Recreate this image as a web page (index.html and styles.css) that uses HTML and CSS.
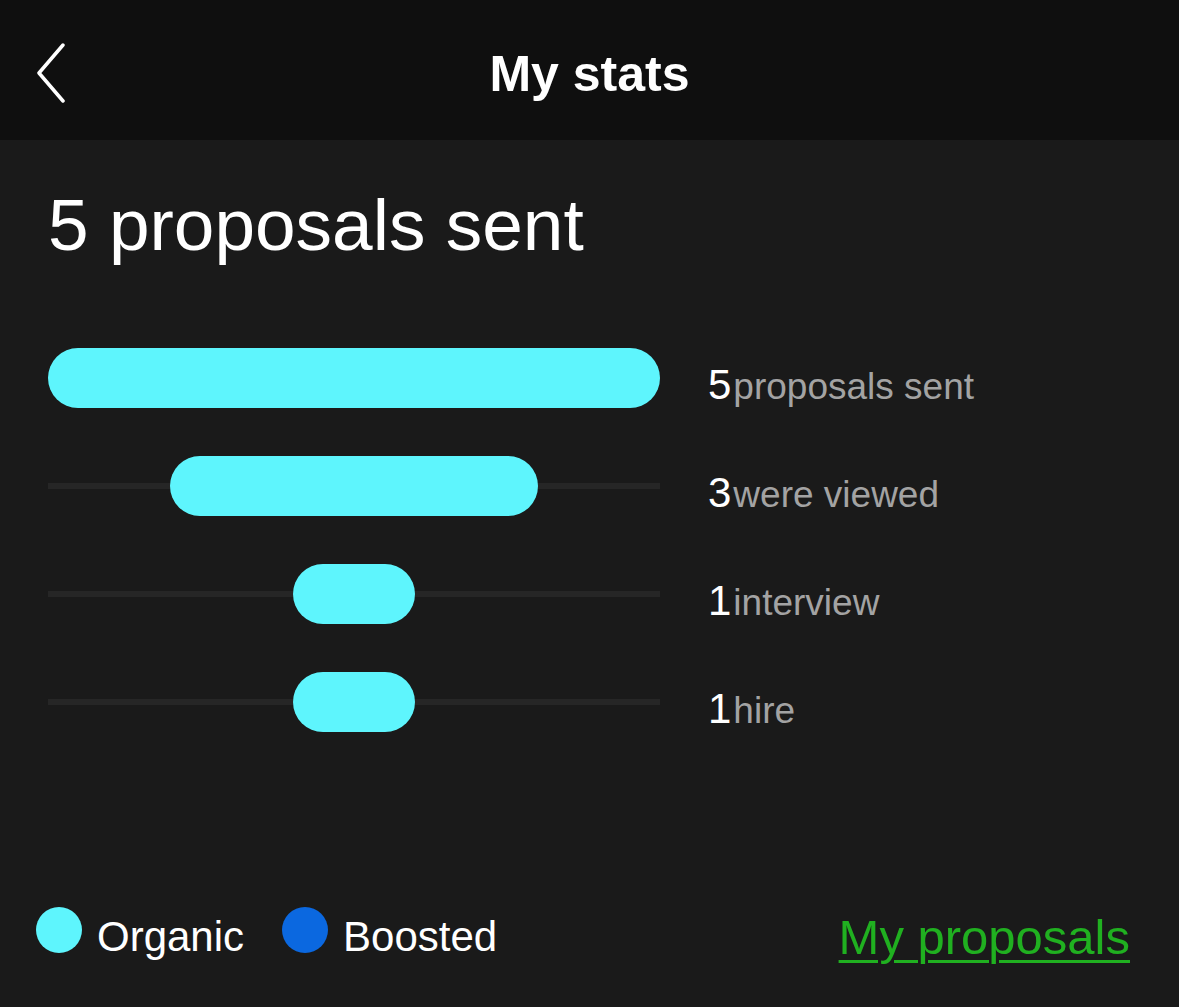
FILE: index.html
```html
<!DOCTYPE html>
<html lang="en">
<head>
    <meta charset="UTF-8">
    <meta name="viewport" content="width=device-width, initial-scale=1.0">
    <title>My stats</title>
    <link rel="stylesheet" href="styles.css">
</head>
<body>
    <header class="top-bar">
        <a class="back-btn" href="#" aria-label="Back">
            <svg width="32" height="60" viewBox="0 0 32 60">
                <path d="M28 2 L4 30 L28 58" fill="none" stroke="#fff" stroke-width="3.5" stroke-linecap="round" stroke-linejoin="round"/>
            </svg>
        </a>
        <h1 class="top-title">My stats</h1>
    </header>

    <main class="stats">
        <h2 class="stats-heading">5 proposals sent</h2>

        <div class="funnel">
            <div class="funnel-row">
                <div class="track"><div class="bar" style="width: 100%"></div></div>
                <div class="funnel-label"><span class="num">5</span><span class="txt">proposals sent</span></div>
            </div>
            <div class="funnel-row">
                <div class="track"><div class="bar" style="width: 60%"></div></div>
                <div class="funnel-label"><span class="num">3</span><span class="txt">were viewed</span></div>
            </div>
            <div class="funnel-row">
                <div class="track"><div class="bar" style="width: 20%"></div></div>
                <div class="funnel-label"><span class="num">1</span><span class="txt">interview</span></div>
            </div>
            <div class="funnel-row">
                <div class="track"><div class="bar" style="width: 20%"></div></div>
                <div class="funnel-label"><span class="num">1</span><span class="txt">hire</span></div>
            </div>
        </div>

        <footer class="stats-footer">
            <div class="legend">
                <div class="legend-item"><span class="dot organic"></span><span class="legend-text">Organic</span></div>
                <div class="legend-item"><span class="dot boosted"></span><span class="legend-text">Boosted</span></div>
            </div>
            <a class="proposals-link" href="#">My proposals</a>
        </footer>
    </main>
</body>
</html>
```

FILE: styles.css
```css
body {
    font-family: "Liberation Sans", Arial, sans-serif;
    margin: 0;
    height: 1007px;
    background-color: #1a1a1a;
    color: #fff;
    display: flex;
    flex-direction: column;
    overflow: hidden;
}

.top-bar {
    height: 140px;
    background-color: #0f0f0f;
    display: flex;
    align-items: center;
    justify-content: center;
    position: relative;
    flex-shrink: 0;
}

.back-btn {
    position: absolute;
    left: 35px;
    top: 43px;
    display: block;
    line-height: 0;
}

.top-title {
    margin: 0;
    font-size: 50px;
    font-weight: bold;
    line-height: 1;
    padding-top: 8px;
}

.stats {
    flex: 1;
    display: flex;
    flex-direction: column;
    padding: 43px 49px 0 48px;
}

.stats-heading {
    margin: 0;
    font-size: 73px;
    font-weight: normal;
    line-height: 84px;
}

.funnel {
    margin-top: 81px;
    display: flex;
    flex-direction: column;
    gap: 48px;
}

.funnel-row {
    height: 60px;
    display: flex;
    align-items: center;
    gap: 48px;
}

.track {
    width: 612px;
    height: 60px;
    display: flex;
    justify-content: center;
    background: linear-gradient(#262626, #262626) center / 100% 6px no-repeat;
}

.bar {
    height: 60px;
    border-radius: 30px;
    background-color: #5ef5fd;
}

.funnel-label {
    display: flex;
    align-items: baseline;
    padding-top: 14px;
}

.num {
    font-size: 42px;
    color: #fff;
    margin-right: 2px;
}

.txt {
    font-size: 37px;
    color: #a3a3a3;
}

.stats-footer {
    margin-top: auto;
    padding-bottom: 42px;
    display: flex;
    justify-content: space-between;
    align-items: center;
}

.legend {
    display: flex;
    align-items: center;
    gap: 38px;
    margin-left: -12px;
}

.legend-item {
    display: flex;
    align-items: center;
    gap: 15px;
    font-size: 42px;
}

.legend-text {
    padding-top: 13px;
}

.dot {
    width: 46px;
    height: 46px;
    border-radius: 50%;
}

.dot.organic {
    background-color: #5ef5fd;
}

.dot.boosted {
    background-color: #0b68e0;
}

.proposals-link {
    font-size: 49px;
    color: #20b020;
    text-decoration: underline;
    text-underline-offset: 6px;
    text-decoration-thickness: 3px;
    padding-top: 14px;
}
```
